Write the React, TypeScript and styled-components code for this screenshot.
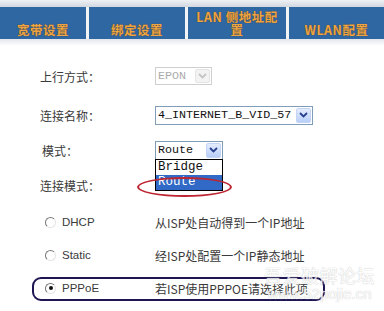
import React from "react";
import styled, { createGlobalStyle } from "styled-components";

const GlobalStyle = createGlobalStyle`
  html, body {
    margin: 0;
    padding: 0;
    background: #fff;
  }
  body {
    width: 384px;
    height: 311px;
    overflow: hidden;
    font-family: "Noto Sans CJK SC", "Liberation Sans", sans-serif;
  }
`;

const Page = styled.div`
  position: relative;
  width: 384px;
  height: 311px;
  overflow: hidden;
  background: #fff;
`;

const TopStrip = styled.div`
  height: 7px;
  background: linear-gradient(#eef1f4, #d2d8e0);
`;

const TabBar = styled.div`
  display: grid;
  grid-template-columns: 86px 96px 98px 1fr;
  column-gap: 3px;
  height: 32px;
  background: #f2f3f5;
`;

const Tab = styled.div<{ $pad?: number }>`
  display: flex;
  align-items: flex-end;
  justify-content: center;
  padding: 0 ${(p) => p.$pad ?? 8}px 3px;
  background: #2f67a3;
  color: #eda443;
  font: bold 12.5px/13px "Noto Sans CJK SC", "Liberation Sans", sans-serif;
  letter-spacing: 0.5px;
  text-align: center;
  text-shadow: 0 0 1px #5a3a12;
`;

const TabShadow = styled.div`
  height: 7px;
  background: linear-gradient(#e2e6eb, #fff);
`;

const Form = styled.div`
  padding: 11px 0 0 40px;
`;

const Row = styled.div<{ $h: number }>`
  position: relative;
  display: grid;
  grid-template-columns: 115px auto;
  align-items: center;
  height: ${(p) => p.$h}px;
`;

const Label = styled.span<{ $indent?: number }>`
  padding-left: ${(p) => p.$indent ?? 0}px;
  color: #3a3a3a;
  font-size: 12px;
  white-space: nowrap;
`;

const Select = styled.div<{ $w: number; $h: number; $disabled?: boolean }>`
  position: relative;
  box-sizing: border-box;
  display: flex;
  align-items: center;
  width: ${(p) => p.$w}px;
  height: ${(p) => p.$h}px;
  padding-left: 2px;
  border: 1px solid ${(p) => (p.$disabled ? "#cfcfcf" : "#7f9db9")};
  background: #fff;
  color: ${(p) => (p.$disabled ? "#ababab" : "#111")};
  font: 11.7px "Liberation Mono", monospace;
`;

const SelectText = styled.span`
  flex: 1;
  white-space: nowrap;
  overflow: hidden;
`;

const ArrowBtn = styled.span<{ $disabled?: boolean }>`
  display: flex;
  align-items: center;
  justify-content: center;
  box-sizing: border-box;
  width: 15px;
  height: calc(100% - 2px);
  margin-right: 1px;
  border: 1px solid ${(p) => (p.$disabled ? "#e4e4e4" : "#c4d4f6")};
  border-radius: 2px;
  background: ${(p) =>
    p.$disabled ? "#f3f3f3" : "linear-gradient(#e4ecfd, #b9cff8)"};
`;

const Chevron = ({ disabled }: { disabled?: boolean }) => (
  <svg width="9" height="6" viewBox="0 0 9 6">
    <path
      d="M1 1 L4.5 4.5 L8 1"
      fill="none"
      stroke={disabled ? "#c5c5c5" : "#27408f"}
      strokeWidth="1.8"
    />
  </svg>
);

const DropList = styled.div`
  position: absolute;
  top: 100%;
  left: -1px;
  box-sizing: border-box;
  width: 68px;
  border: 1px solid #000;
  background: #fff;
  z-index: 2;
`;

const DropItem = styled.div<{ $active?: boolean }>`
  height: 15px;
  padding-left: 2px;
  background: ${(p) => (p.$active ? "#3169c6" : "#fff")};
  color: ${(p) => (p.$active ? "#fff" : "#111")};
  font: 12.5px/15px "Liberation Mono", monospace;
`;

const RedRing = styled.span`
  position: absolute;
  left: -19px;
  top: 17px;
  width: 95px;
  height: 20px;
  box-sizing: border-box;
  border: 2px solid #bd2630;
  border-radius: 50%;
  z-index: 3;
`;

const Option = styled.span`
  display: flex;
  align-items: center;
  gap: 6px;
  padding-left: 5px;
  color: #3a3a3a;
  font: 11.5px "Liberation Sans", sans-serif;
`;

const Radio = styled.span<{ $checked?: boolean }>`
  position: relative;
  box-sizing: border-box;
  width: 11px;
  height: 11px;
  border: 1px solid;
  border-color: #777 #e4e4e4 #e4e4e4 #777;
  border-radius: 50%;
  background: #fff;

  &::after {
    content: "";
    display: ${(p) => (p.$checked ? "block" : "none")};
    position: absolute;
    left: 2.5px;
    top: 2.5px;
    width: 4px;
    height: 4px;
    border-radius: 50%;
    background: #111;
  }
`;

const Desc = styled.span`
  color: #3a3a3a;
  font-size: 12px;
  white-space: nowrap;
`;

const BlueRing = styled.span`
  position: absolute;
  left: -8px;
  top: 6px;
  width: 293px;
  height: 24px;
  box-sizing: border-box;
  border: 2px solid #1d1652;
  border-radius: 9px;
`;

const Watermark = styled.div`
  position: absolute;
  left: 264px;
  top: 265px;
  display: flex;
  flex-direction: column;
  align-items: center;
  color: #fdfdfd;
  text-shadow: 0 0 1px #c4c4c4, 0 0 1px #c4c4c4;
  opacity: 0.8;
  pointer-events: none;
`;

const WatermarkTitle = styled.span`
  font: 18px/21px "Noto Sans CJK SC", sans-serif;
  letter-spacing: 0.5px;
`;

const WatermarkUrl = styled.span`
  font: 15px/16px "Liberation Sans", sans-serif;
`;

export default function App() {
  return (
    <Page>
      <GlobalStyle />
      <TopStrip />
      <TabBar>
        <Tab>宽带设置</Tab>
        <Tab>绑定设置</Tab>
        <Tab $pad={2}>LAN 侧地址配置</Tab>
        <Tab>WLAN配置</Tab>
      </TabBar>
      <TabShadow />

      <Form>
        <Row $h={38}>
          <Label>上行方式：</Label>
          <Select $w={57} $h={18} $disabled>
            <SelectText>EPON</SelectText>
            <ArrowBtn $disabled>
              <Chevron disabled />
            </ArrowBtn>
          </Select>
        </Row>

        <Row $h={40}>
          <Label>连接名称：</Label>
          <Select $w={158} $h={19}>
            <SelectText>4_INTERNET_B_VID_57</SelectText>
            <ArrowBtn>
              <Chevron />
            </ArrowBtn>
          </Select>
        </Row>

        <Row $h={30}>
          <Label $indent={2}>模式：</Label>
          <Select $w={68} $h={19}>
            <SelectText>Route</SelectText>
            <ArrowBtn>
              <Chevron />
            </ArrowBtn>
            <DropList>
              <DropItem>Bridge</DropItem>
              <DropItem $active>Route</DropItem>
              <RedRing />
            </DropList>
          </Select>
        </Row>

        <Row $h={40}>
          <Label>连接模式：</Label>
        </Row>

        <Row $h={34}>
          <Option>
            <Radio />
            DHCP
          </Option>
          <Desc>从ISP处自动得到一个IP地址</Desc>
        </Row>

        <Row $h={32}>
          <Option>
            <Radio />
            Static
          </Option>
          <Desc>经ISP处配置一个IP静态地址</Desc>
        </Row>

        <Row $h={34}>
          <BlueRing />
          <Option>
            <Radio $checked />
            PPPoE
          </Option>
          <Desc>若ISP使用PPPOE请选择此项</Desc>
        </Row>
      </Form>

      <Watermark>
        <WatermarkTitle>吾爱破解论坛</WatermarkTitle>
        <WatermarkUrl>www.52pojie.cn</WatermarkUrl>
      </Watermark>
    </Page>
  );
}
